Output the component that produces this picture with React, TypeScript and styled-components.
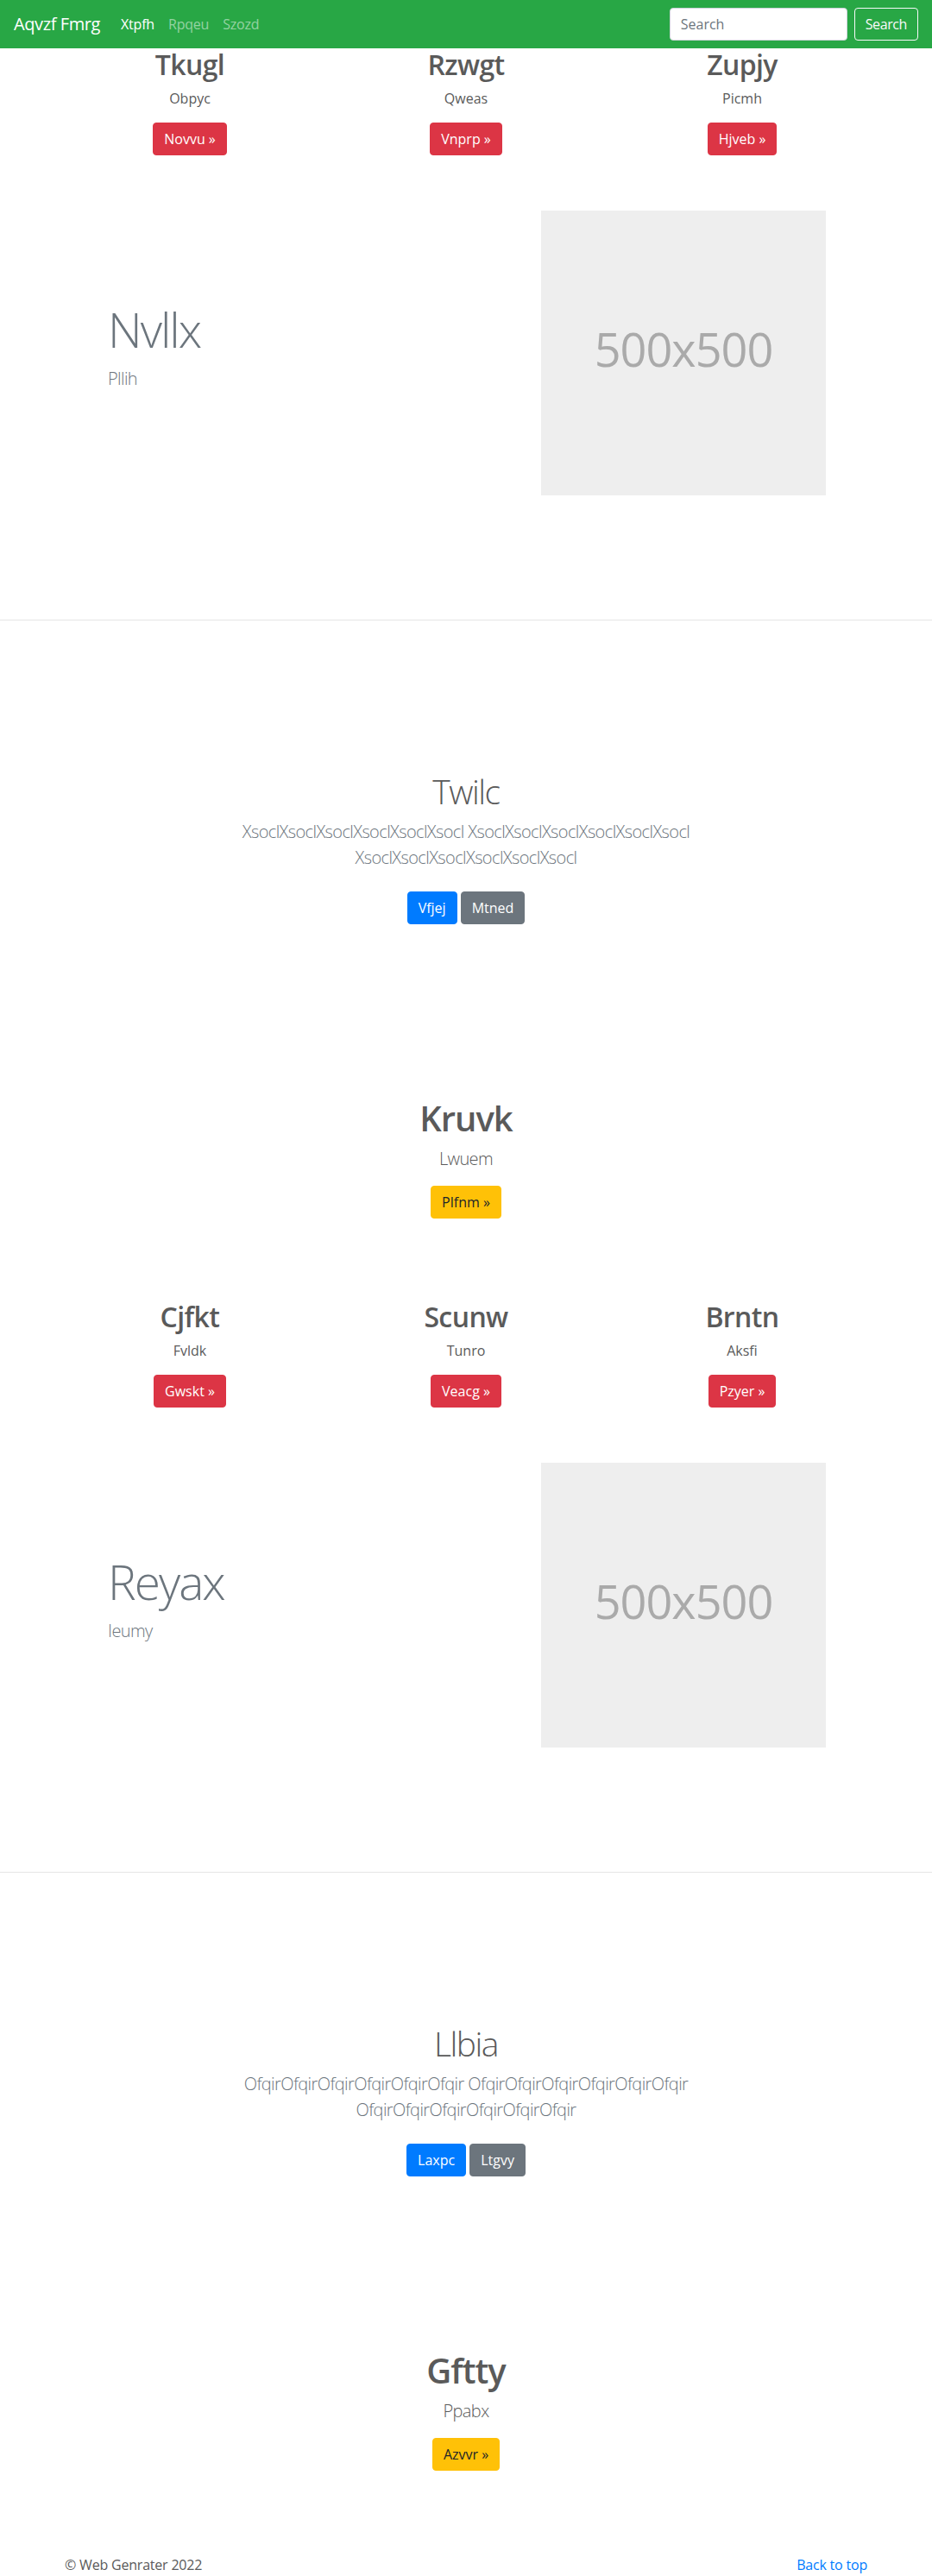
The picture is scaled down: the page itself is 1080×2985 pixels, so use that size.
import React from "react";
import styled, { createGlobalStyle } from "styled-components";

const GlobalStyle = createGlobalStyle`
  *, *::before, *::after { box-sizing: border-box; }
  html, body { margin: 0; padding: 0; }
  body {
    font-family: "Open Sans", "Noto Sans", "Liberation Sans", sans-serif;
    font-size: 16px;
    line-height: 1.5;
    color: #5a5a5a;
    background: #fff;
  }
  h1, h2, p { margin: 0; }
`;

const NavBar = styled.nav`
  display: flex;
  align-items: center;
  height: 56px;
  padding: 8px 16px;
  background: #28a745;
`;

const Brand = styled.a`
  font-size: 20px;
  line-height: 30px;
  padding: 5px 0;
  margin-right: 16px;
  letter-spacing: -0.4px;
  color: #fff;
  text-decoration: none;
  white-space: nowrap;
`;

const NavList = styled.ul`
  display: flex;
  flex: 1;
  list-style: none;
  margin: 0;
  padding: 0;
`;

const NavLink = styled.a<{ $active?: boolean }>`
  display: block;
  padding: 8px;
  font-size: 16px;
  line-height: 24px;
  letter-spacing: -0.2px;
  color: ${(p) => (p.$active ? "#fff" : "rgba(255,255,255,.5)")};
  text-decoration: none;
`;

const SearchForm = styled.form`
  display: flex;
  align-items: center;
`;

const SearchInput = styled.input`
  width: 206px;
  height: 38px;
  padding: 6px 12px;
  margin-right: 8px;
  font-family: inherit;
  font-size: 16px;
  line-height: 1.5;
  color: #495057;
  background: #fff;
  border: 1px solid #ced4da;
  border-radius: 4px;
  &::placeholder { color: #6c757d; }
`;

const SearchButton = styled.button`
  height: 38px;
  padding: 6px 12px;
  font-family: inherit;
  font-size: 16px;
  line-height: 1.5;
  letter-spacing: -0.4px;
  color: #f8f9fa;
  background: transparent;
  border: 1px solid #f8f9fa;
  border-radius: 4px;
`;

const CardsRow = styled.section<{ $top: number }>`
  width: 960px;
  margin: 0 auto;
  padding-top: ${(p) => p.$top}px;
  display: grid;
  grid-template-columns: repeat(3, 1fr);
`;

const Card = styled.div`
  padding: 0 15px;
  text-align: center;
`;

const CardTitle = styled.h2`
  font-size: 32px;
  font-weight: 600;
  line-height: 1.2;
  letter-spacing: -0.6px;
  margin-bottom: 8px;
`;

const CardText = styled.p`
  margin-bottom: 16px;
`;

const ButtonRow = styled.div<{ $spaced?: boolean }>`
  display: flex;
  justify-content: center;
  gap: 4px;
  padding: ${(p) => (p.$spaced ? "8px 0" : "0")};
  margin-bottom: 16px;
`;

type Variant = "danger" | "primary" | "secondary" | "warning";
const btnColors: Record<Variant, [string, string]> = {
  danger: ["#dc3545", "#fff"],
  primary: ["#007bff", "#fff"],
  secondary: ["#6c757d", "#fff"],
  warning: ["#ffc107", "#212529"],
};

const Btn = styled.a<{ $variant: Variant }>`
  display: inline-block;
  padding: 6px 12px;
  font-size: 16px;
  line-height: 24px;
  border: 1px solid ${(p) => btnColors[p.$variant][0]};
  border-radius: 4px;
  background: ${(p) => btnColors[p.$variant][0]};
  color: ${(p) => btnColors[p.$variant][1]};
  text-decoration: none;
  white-space: nowrap;
`;

const Hero = styled.section`
  display: flex;
  align-items: center;
  padding: 47.6px 123px 144px 125px;
`;

const HeroText = styled.div`
  flex: 1;
`;

const DisplayHeading = styled.h1`
  font-size: 55px;
  font-weight: 300;
  line-height: 67.2px;
  letter-spacing: -2px;
  color: #6c757d;
  margin-bottom: 8px;
`;

const Lead = styled.p<{ $muted?: boolean }>`
  font-size: 20px;
  font-weight: 300;
  line-height: 30px;
  letter-spacing: -0.6px;
  margin-bottom: 16px;
  color: ${(p) => (p.$muted ? "#6c757d" : "#5a5a5a")};
`;

const PlaceholderSvg = styled.svg`
  display: block;
  flex: none;
  font-family: "Open Sans", "Noto Sans", sans-serif;
  font-size: 54px;
  letter-spacing: -1px;
  text-anchor: middle;
`;

const Divider = styled.hr`
  margin: 0;
  border: 0;
  border-top: 1px solid rgba(0, 0, 0, 0.1);
`;

const Jumbo = styled.section`
  padding: 174.4px 0 177px;
  text-align: center;
`;

const JumboInner = styled.div`
  max-width: 610px;
  margin: 0 auto;
`;

const JumboTitle = styled.h1`
  font-size: 39px;
  font-weight: 300;
  line-height: 48px;
  letter-spacing: -1.5px;
  margin-bottom: 8px;
`;

const Feature = styled.section`
  text-align: center;
`;

const FeatureTitle = styled.h1`
  font-size: 40px;
  font-weight: 600;
  line-height: 48px;
  letter-spacing: -1px;
  margin-bottom: 8px;
`;

const Footer = styled.footer`
  width: 960px;
  margin: 0 auto;
  padding: 80.2px 15px 1px;
  display: flex;
  justify-content: space-between;
  letter-spacing: -0.2px;
`;

const FooterLink = styled.a`
  color: #007bff;
  text-decoration: none;
`;

type CardData = { title: string; text: string; btn: string };
type UnitData = {
  top: number;
  cards: CardData[];
  hero: { title: string; lead: string };
  jumbo: { title: string; lead: string; primary: string; secondary: string };
  feature: { title: string; lead: string; btn: string };
};

const units: UnitData[] = [
  {
    top: 0,
    cards: [
      { title: "Tkugl", text: "Obpyc", btn: "Novvu »" },
      { title: "Rzwgt", text: "Qweas", btn: "Vnprp »" },
      { title: "Zupjy", text: "Picmh", btn: "Hjveb »" },
    ],
    hero: { title: "Nvllx", lead: "Pllih" },
    jumbo: {
      title: "Twilc",
      lead: "XsoclXsoclXsoclXsoclXsoclXsocl XsoclXsoclXsoclXsoclXsoclXsocl XsoclXsoclXsoclXsoclXsoclXsocl",
      primary: "Vfjej",
      secondary: "Mtned",
    },
    feature: { title: "Kruvk", lead: "Lwuem", btn: "Plfnm »" },
  },
  {
    top: 78.6,
    cards: [
      { title: "Cjfkt", text: "Fvldk", btn: "Gwskt »" },
      { title: "Scunw", text: "Tunro", btn: "Veacg »" },
      { title: "Brntn", text: "Aksfi", btn: "Pzyer »" },
    ],
    hero: { title: "Reyax", lead: "Ieumy" },
    jumbo: {
      title: "Llbia",
      lead: "OfqirOfqirOfqirOfqirOfqirOfqir OfqirOfqirOfqirOfqirOfqirOfqir OfqirOfqirOfqirOfqirOfqirOfqir",
      primary: "Laxpc",
      secondary: "Ltgvy",
    },
    feature: { title: "Gftty", lead: "Ppabx", btn: "Azvvr »" },
  },
];

function Placeholder() {
  return (
    <PlaceholderSvg width="330" height="330" role="img" aria-label="500x500">
      <rect width="100%" height="100%" fill="#eee" />
      <text x="50%" y="50%" fill="#aaa" dy=".3em">500x500</text>
    </PlaceholderSvg>
  );
}

function Unit({ data }: { data: UnitData }) {
  return (
    <>
      <CardsRow $top={data.top}>
        {data.cards.map((c) => (
          <Card key={c.title}>
            <CardTitle>{c.title}</CardTitle>
            <CardText>{c.text}</CardText>
            <ButtonRow>
              <Btn $variant="danger" href="#">{c.btn}</Btn>
            </ButtonRow>
          </Card>
        ))}
      </CardsRow>
      <Hero>
        <HeroText>
          <DisplayHeading>{data.hero.title}</DisplayHeading>
          <Lead $muted>{data.hero.lead}</Lead>
        </HeroText>
        <Placeholder />
      </Hero>
      <Divider />
      <Jumbo>
        <JumboInner>
          <JumboTitle>{data.jumbo.title}</JumboTitle>
          <Lead $muted>{data.jumbo.lead}</Lead>
          <ButtonRow $spaced>
            <Btn $variant="primary" href="#">{data.jumbo.primary}</Btn>
            <Btn $variant="secondary" href="#">{data.jumbo.secondary}</Btn>
          </ButtonRow>
        </JumboInner>
      </Jumbo>
      <Feature>
        <FeatureTitle>{data.feature.title}</FeatureTitle>
        <Lead>{data.feature.lead}</Lead>
        <ButtonRow>
          <Btn $variant="warning" href="#">{data.feature.btn}</Btn>
        </ButtonRow>
      </Feature>
    </>
  );
}

export default function App() {
  return (
    <>
      <GlobalStyle />
      <NavBar>
        <Brand href="#">Aqvzf Fmrg</Brand>
        <NavList>
          <li><NavLink $active href="#">Xtpfh</NavLink></li>
          <li><NavLink href="#">Rpqeu</NavLink></li>
          <li><NavLink href="#">Szozd</NavLink></li>
        </NavList>
        <SearchForm onSubmit={(e) => e.preventDefault()}>
          <SearchInput type="search" placeholder="Search" aria-label="Search" />
          <SearchButton type="submit">Search</SearchButton>
        </SearchForm>
      </NavBar>
      {units.map((u) => (
        <Unit key={u.hero.title} data={u} />
      ))}
      <Footer>
        <p>© Web Genrater 2022</p>
        <FooterLink href="#">Back to top</FooterLink>
      </Footer>
    </>
  );
}
